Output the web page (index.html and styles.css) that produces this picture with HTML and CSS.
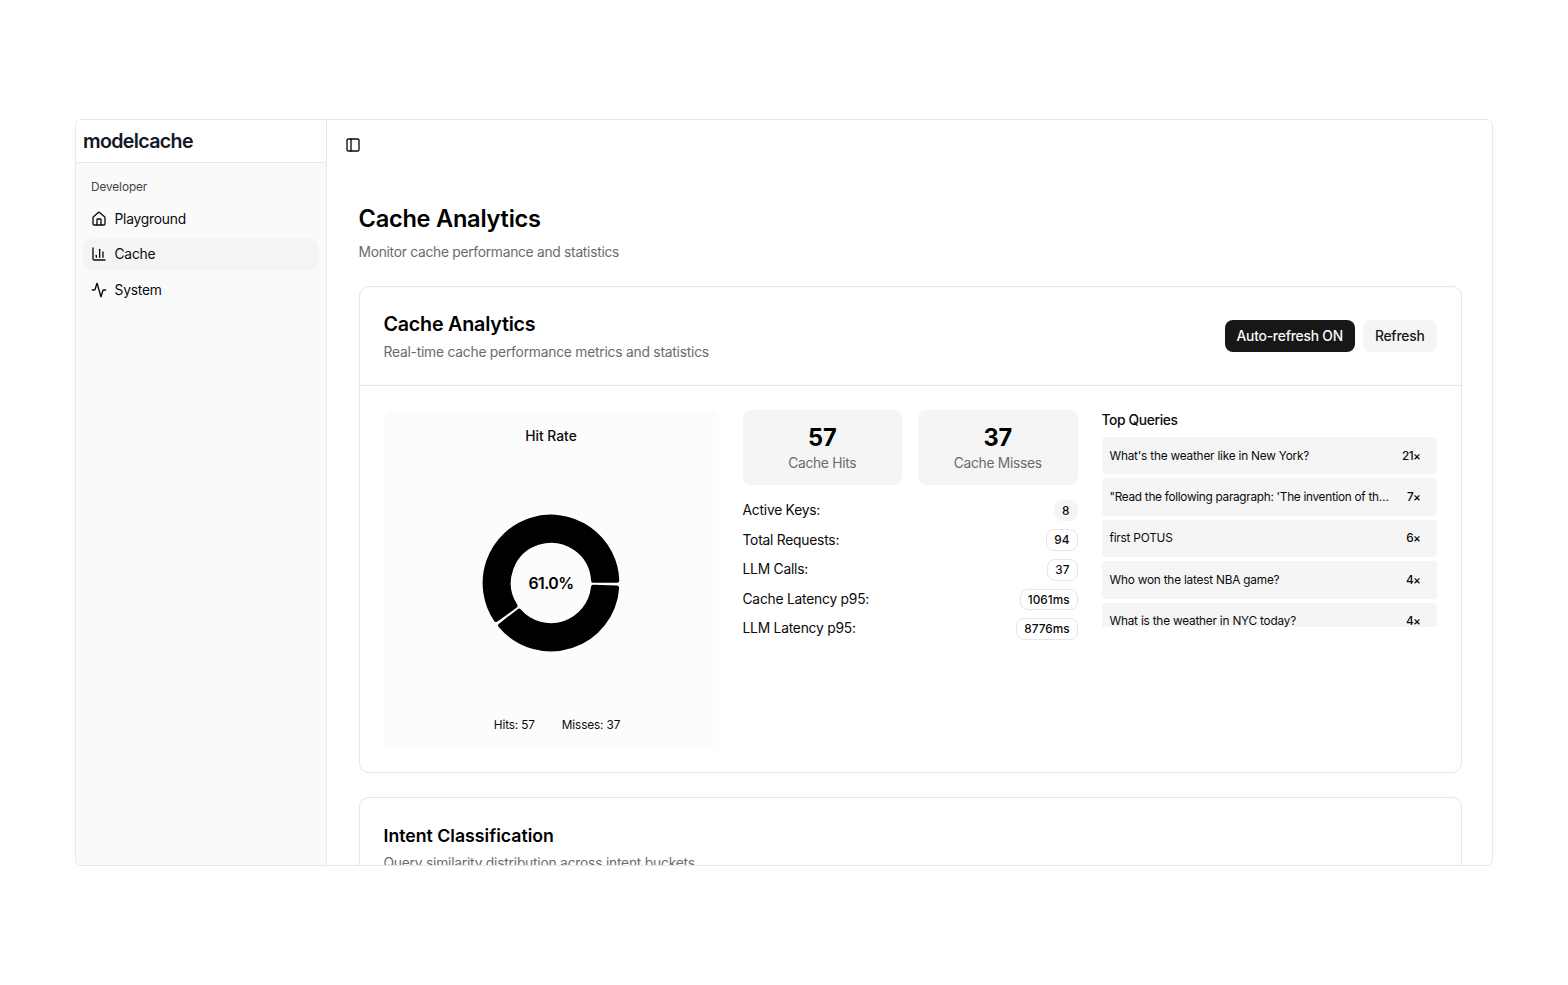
FILE: index.html
```html
<!DOCTYPE html>
<html lang="en">
<head>
  <meta charset="UTF-8">
  <meta name="viewport" content="width=device-width, initial-scale=1.0">
  <title>modelcache</title>
  <link rel="stylesheet" href="styles.css">
</head>

<body>
  <div class="window">
    <aside class="sidebar">
      <div class="brand">modelcache</div>
      <nav class="menu">
        <p class="menu-label">Developer</p>
        <a class="menu-item">
          <svg class="icon" viewBox="0 0 24 24"><path d="M15 21v-8a1 1 0 0 0-1-1h-4a1 1 0 0 0-1 1v8"/><path d="M3 10a2 2 0 0 1 .709-1.528l7-6a2 2 0 0 1 2.582 0l7 6A2 2 0 0 1 21 10v9a2 2 0 0 1-2 2H5a2 2 0 0 1-2-2z"/></svg>
          <span>Playground</span>
        </a>
        <a class="menu-item active">
          <svg class="icon" viewBox="0 0 24 24"><path d="M3 3v16a2 2 0 0 0 2 2h16"/><path d="M18 17V9"/><path d="M13 17V5"/><path d="M8 17v-3"/></svg>
          <span>Cache</span>
        </a>
        <a class="menu-item">
          <svg class="icon" viewBox="0 0 24 24"><path d="M22 12h-2.480a2 2 0 0 0-1.930 1.460l-2.350 8.360a.25.25 0 0 1-.48 0L9.240 2.180a.25.25 0 0 0-.48 0l-2.350 8.360A2 2 0 0 1 4.490 12H2"/></svg>
          <span>System</span>
        </a>
      </nav>
    </aside>

    <main class="main">
      <div class="topbar">
        <svg class="icon" viewBox="0 0 24 24"><rect width="18" height="18" x="3" y="3" rx="2"/><path d="M9 3v18"/></svg>
      </div>

      <h1>Cache Analytics</h1>
      <p class="muted intro">Monitor cache performance and statistics</p>

      <section class="card">
        <div class="card-header">
          <div>
            <h2>Cache Analytics</h2>
            <p class="muted">Real-time cache performance metrics and statistics</p>
          </div>
          <div class="buttons">
            <button class="btn dark">Auto-refresh ON</button>
            <button class="btn">Refresh</button>
          </div>
        </div>

        <div class="card-body">
          <div class="hit-rate">
            <h3>Hit Rate</h3>
            <svg class="donut" viewBox="-70 -70 140 140">
              <path d="M65.950-2.500A66 66 0 1 0-54.890 36.640L-35.830 22.850A42.500 42.500 0 1 1 42.430-2.500Z"/>
              <path d="M-50.510 42.480A66 66 0 0 0 65.830 4.800L42.310 3.980A42.500 42.500 0 0 1-31.940 28.030Z"/>
              <text x="0" y="5.500">61.0%</text>
            </svg>
            <div class="legend">
              <span>Hits: 57</span>
              <span>Misses: 37</span>
            </div>
          </div>

          <div class="stats">
            <div class="totals">
              <div class="total"><strong>57</strong><p class="muted">Cache Hits</p></div>
              <div class="total"><strong>37</strong><p class="muted">Cache Misses</p></div>
            </div>
            <ul class="rows">
              <li><span>Active Keys:</span><b class="badge filled">8</b></li>
              <li><span>Total Requests:</span><b class="badge">94</b></li>
              <li><span>LLM Calls:</span><b class="badge">37</b></li>
              <li><span>Cache Latency p95:</span><b class="badge">1061ms</b></li>
              <li><span>LLM Latency p95:</span><b class="badge">8776ms</b></li>
            </ul>
          </div>

          <div class="queries">
            <h3>Top Queries</h3>
            <ul class="query-list">
              <li><span>What's the weather like in New York?</span><b>21×</b></li>
              <li><span class="long">"Read the following paragraph: 'The invention of th…</span><b>7×</b></li>
              <li><span>first POTUS</span><b>6×</b></li>
              <li><span>Who won the latest NBA game?</span><b>4×</b></li>
              <li><span>What is the weather in NYC today?</span><b>4×</b></li>
            </ul>
          </div>
        </div>
      </section>

      <section class="card">
        <div class="card-header">
          <div>
            <h2 class="intent">Intent Classification</h2>
            <p class="muted">Query similarity distribution across intent buckets</p>
          </div>
        </div>
      </section>
    </main>
  </div>
</body>
</html>
```
FILE: styles.css
```css
*{
  margin: 0;
  padding: 0;
  box-sizing: border-box;
}
body{
  height: 985px;
  padding: 119px 75px;
  background: #fff;
  color: #0a0a0a;
  font-family: Inter, "Liberation Sans", sans-serif;
  font-size: 13.8px;
  letter-spacing: -0.22px;
  line-height: 20px;
  overflow: hidden;
}
ul{
  list-style: none;
}
.window{
  display: flex;
  width: 1418px;
  height: 747px;
  border: 1px solid #e9e9e9;
  border-radius: 6px;
  overflow: hidden;
}
.icon{
  width: 16px;
  height: 16px;
  flex: none;
  fill: none;
  stroke: #0a0a0a;
  stroke-width: 2;
  stroke-linecap: round;
  stroke-linejoin: round;
}

/* sidebar */
.sidebar{
  width: 251px;
  flex: none;
  background: #fafafa;
  border-right: 1px solid #e8e8e8;
}
.brand{
  height: 43px;
  padding: 0 7px;
  background: #fff;
  border-bottom: 1px solid #e8e8e8;
  color: #111827;
  font-size: 19.6px;
  font-weight: 600;
  letter-spacing: -0.65px;
  line-height: 42px;
}
.menu{
  padding: 8px 8px 0 7px;
}
.menu-label{
  padding: 0 8px;
  color: #444;
  font-size: 11.8px;
  letter-spacing: -0.08px;
  line-height: 32px;
}
.menu-item{
  display: flex;
  align-items: center;
  gap: 8px;
  height: 31.5px;
  margin-bottom: 4px;
  padding: 0 7.5px;
  border-radius: 8px;
}
.menu-item.active{
  background: #f4f4f4;
}

/* main */
.main{
  flex: 1;
  padding: 0 30.5px 0 31.5px;
}
.topbar{
  display: flex;
  align-items: center;
  height: 49px;
  margin-left: -14px;
}
h1{
  margin-top: 34px;
  color: #000;
  font-size: 23.6px;
  font-weight: 600;
  letter-spacing: -0.25px;
  line-height: 32px;
}
.muted{
  color: #6b6b6b;
}
.intro{
  margin-top: 7px;
  letter-spacing: -0.28px;
}
.card{
  margin-top: 24px;
  border: 1px solid #e5e5e5;
  border-radius: 10px;
}
.card-header{
  display: flex;
  align-items: center;
  justify-content: space-between;
  height: 99px;
  padding: 0 24px;
  border-bottom: 1px solid #e5e5e5;
}
h2{
  margin-bottom: 4px;
  color: #000;
  font-size: 19.7px;
  font-weight: 600;
  line-height: 28px;
}
h2.intent{
  font-size: 17.7px;
  letter-spacing: 0;
  line-height: 27px;
}
h3{
  font-size: 13.8px;
  font-weight: 500;
  letter-spacing: 0;
  line-height: 20px;
}
.buttons{
  display: flex;
  gap: 8px;
}
.btn{
  height: 32px;
  padding: 0 12px;
  border: none;
  border-radius: 8px;
  background: #f5f5f5;
  color: #171717;
  font: inherit;
  font-weight: 500;
  letter-spacing: -0.2px;
}
.btn.dark{
  background: #171717;
  color: #fafafa;
}
.card-body{
  display: grid;
  grid-template-columns: repeat(3, 1fr);
  align-items: start;
  gap: 24px;
  padding: 24px 24px 23px;
}

/* donut */
.hit-rate{
  display: flex;
  flex-direction: column;
  align-items: center;
  justify-content: space-between;
  height: 339px;
  padding: 16px;
  border-radius: 10px;
  background: #fcfcfc;
}
.donut{
  width: 140px;
  height: 140px;
  margin-top: 2px;
}
.donut path{
  fill: #000;
  stroke: #000;
  stroke-width: 4.7;
  stroke-linejoin: round;
}
.donut text{
  font-size: 15.8px;
  font-weight: 600;
  letter-spacing: -0.5px;
  text-anchor: middle;
}
.legend{
  display: flex;
  gap: 27px;
  padding-left: 12px;
  font-size: 11.8px;
  letter-spacing: -0.14px;
  line-height: 16px;
}

/* numbers */
.totals{
  display: grid;
  grid-template-columns: 1fr 1fr;
  gap: 16px;
}
.total{
  height: 74.5px;
  padding-top: 12px;
  border-radius: 8px;
  background: #f5f5f5;
  text-align: center;
}
.total strong{
  display: block;
  color: #000;
  font-size: 23.6px;
  font-weight: 700;
  line-height: 31px;
}
.total .muted{
  letter-spacing: -0.28px;
}
.rows{
  margin-top: 15.3px;
}
.rows li{
  display: flex;
  align-items: center;
  justify-content: space-between;
  height: 21.7px;
  margin-bottom: 7.9px;
}
.rows span{
  padding-bottom: 1px;
}
.badge{
  height: 21.7px;
  padding: 0 7px;
  border: 1px solid #e5e5e5;
  border-radius: 8px;
  font-size: 11.8px;
  font-weight: 500;
  letter-spacing: 0;
  line-height: 20px;
}
.badge.filled{
  background: #f5f5f5;
  border-color: #f5f5f5;
}
.queries h3{
  letter-spacing: -0.35px;
}
.query-list{
  height: 190px;
  margin-top: 7px;
  overflow: hidden;
}
.query-list li{
  display: flex;
  justify-content: space-between;
  align-items: center;
  height: 37.4px;
  margin-bottom: 4px;
  padding: 0 16px 0 8px;
  border-radius: 4px;
  background: #f5f5f5;
  font-size: 11.8px;
  letter-spacing: -0.2px;
  white-space: nowrap;
}
.query-list .long{
  letter-spacing: -0.29px;
}
.query-list b{
  font-weight: 500;
  letter-spacing: -0.5px;
}
```
